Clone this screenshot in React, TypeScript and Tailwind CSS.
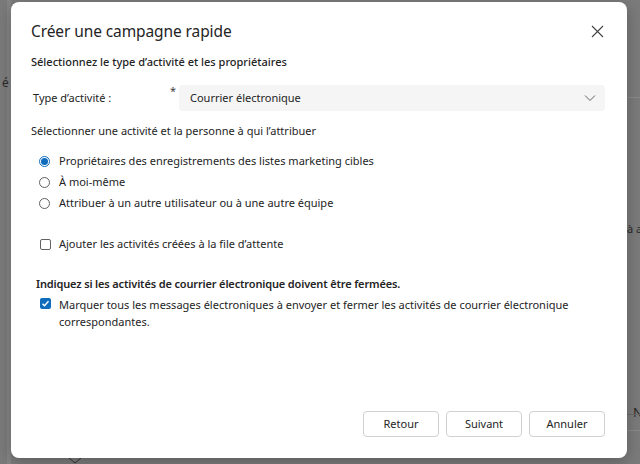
import React from "react";

export default function App() {
  return (
    <div
      className="relative w-[640px] h-[464px] overflow-hidden bg-[#7b7b7b]"
      style={{ fontFamily: '"Noto Sans", "Open Sans", sans-serif' }}
    >
      {/* faint background content behind overlay */}
      <div className="absolute left-[7px] top-0 w-[4px] h-full bg-[#858585]" />
      <div className="absolute left-[2px] top-[74px] text-[12px] text-[#2a2a2a]">é</div>
      <div className="absolute left-[627px] top-[221px] text-[11px] text-[#2a2a2a] whitespace-nowrap">à a</div>
      <div className="absolute left-[633px] top-[403px] text-[13px] text-[#2a2a2a]">N</div>
      <div className="absolute left-[627px] top-[97px] w-[13px] h-px bg-[#8a8a8a]" />
      <div className="absolute left-[627px] top-[414px] w-[13px] h-px bg-[#6a6a6a]" />
      <div className="absolute left-[627px] top-[430px] w-[13px] h-px bg-[#8a8a8a]" />
      <svg className="absolute left-[68px] top-[457px]" width="14" height="8" viewBox="0 0 14 8">
        <path d="M1 1l6 5 6-5" fill="none" stroke="#333" strokeWidth="1" />
      </svg>

      {/* dialog */}
      <div className="absolute left-[11px] top-[2px] w-[616px] h-[456px] bg-white rounded-[8px] shadow-[0_4px_16px_rgba(0,0,0,0.25)] flex flex-col pl-[20px] pr-[22px] pt-[17px] pb-[21px] text-[#242424]">
        <div className="flex items-start justify-between">
          <div className="text-[15.5px] leading-[24px] text-[#242424] tracking-[-0.1px]">Créer une campagne rapide</div>
          <button className="mt-[2px] mr-[-2px] w-[20px] h-[20px] flex items-center justify-center">
            <svg width="13" height="13" viewBox="0 0 13 13">
              <path d="M1 1l11 11M12 1L1 12" stroke="#424242" strokeWidth="1.1" fill="none" />
            </svg>
          </button>
        </div>

        <div className="mt-[11px] text-[11px] leading-[16px] font-medium">
          Sélectionnez le type d’activité et les propriétaires
        </div>

        <div className="mt-[15px] flex items-center">
          <div className="w-[139px] pl-[2px] text-[11px]">Type d’activité :</div>
          <div className="w-[9px] text-[11px] text-[#424242] self-start -mt-[2px]">*</div>
          <div className="flex-1 h-[26px] bg-[#f5f5f5] rounded-[4px] flex items-center justify-between pl-[11px] pr-[9px]">
            <span className="text-[11px]">Courrier électronique</span>
            <svg width="12" height="8" viewBox="0 0 12 8">
              <path d="M1 1.5l5 5 5-5" stroke="#616161" strokeWidth="1" fill="none" />
            </svg>
          </div>
        </div>

        <div className="mt-[12px] text-[11px] leading-[16px]">
          Sélectionner une activité et la personne à qui l’attribuer
        </div>

        <div className="mt-[14px] flex flex-col gap-[5px] pl-[8px]">
          {[
            ["Propriétaires des enregistrements des listes marketing cibles", true],
            ["À moi-même", false],
            ["Attribuer à un autre utilisateur ou à une autre équipe", false],
          ].map(([label, checked]) => (
            <div key={label as string} className="flex items-center h-[16px]">
              <span
                className={
                  checked
                    ? "w-[11px] h-[11px] rounded-full border border-[#0f6cbd] flex items-center justify-center"
                    : "w-[11px] h-[11px] rounded-full border border-[#616161]"
                }
              >
                {checked ? <span className="w-[7px] h-[7px] rounded-full bg-[#0f6cbd]" /> : null}
              </span>
              <span className="ml-[9px] text-[11px]">{label as string}</span>
            </div>
          ))}
        </div>

        <div className="mt-[25px] flex items-center pl-[9px] h-[16px]">
          <span className="w-[11px] h-[11px] rounded-[2px] border border-[#616161]" />
          <span className="ml-[8px] text-[11px]">Ajouter les activités créées à la file d’attente</span>
        </div>

        <div className="mt-[24px] pl-[5px] text-[11px] leading-[16px] font-semibold tracking-[-0.15px]">
          Indiquez si les activités de courrier électronique doivent être fermées.
        </div>

        <div className="mt-[4px] flex items-start pl-[9px]">
          <span className="mt-[2px] w-[11px] h-[11px] rounded-[2px] bg-[#0f6cbd] flex items-center justify-center shrink-0">
            <svg width="9" height="9" viewBox="0 0 9 9">
              <path d="M1.5 4.7l2 2 4-4.5" stroke="white" strokeWidth="1.4" fill="none" />
            </svg>
          </span>
          <span className="ml-[8px] text-[11px] leading-[17px]">
            Marquer tous les messages électroniques à envoyer et fermer les activités de courrier électronique
            <br />
            correspondantes.
          </span>
        </div>

        <div className="flex-1" />

        <div className="flex justify-end gap-[7px]">
          {["Retour", "Suivant", "Annuler"].map((b) => (
            <button
              key={b}
              className="w-[76px] h-[26px] border border-[#d1d1d1] rounded-[4px] bg-white text-[11px] text-[#242424] flex items-center justify-center"
            >
              {b}
            </button>
          ))}
        </div>
      </div>
    </div>
  );
}
